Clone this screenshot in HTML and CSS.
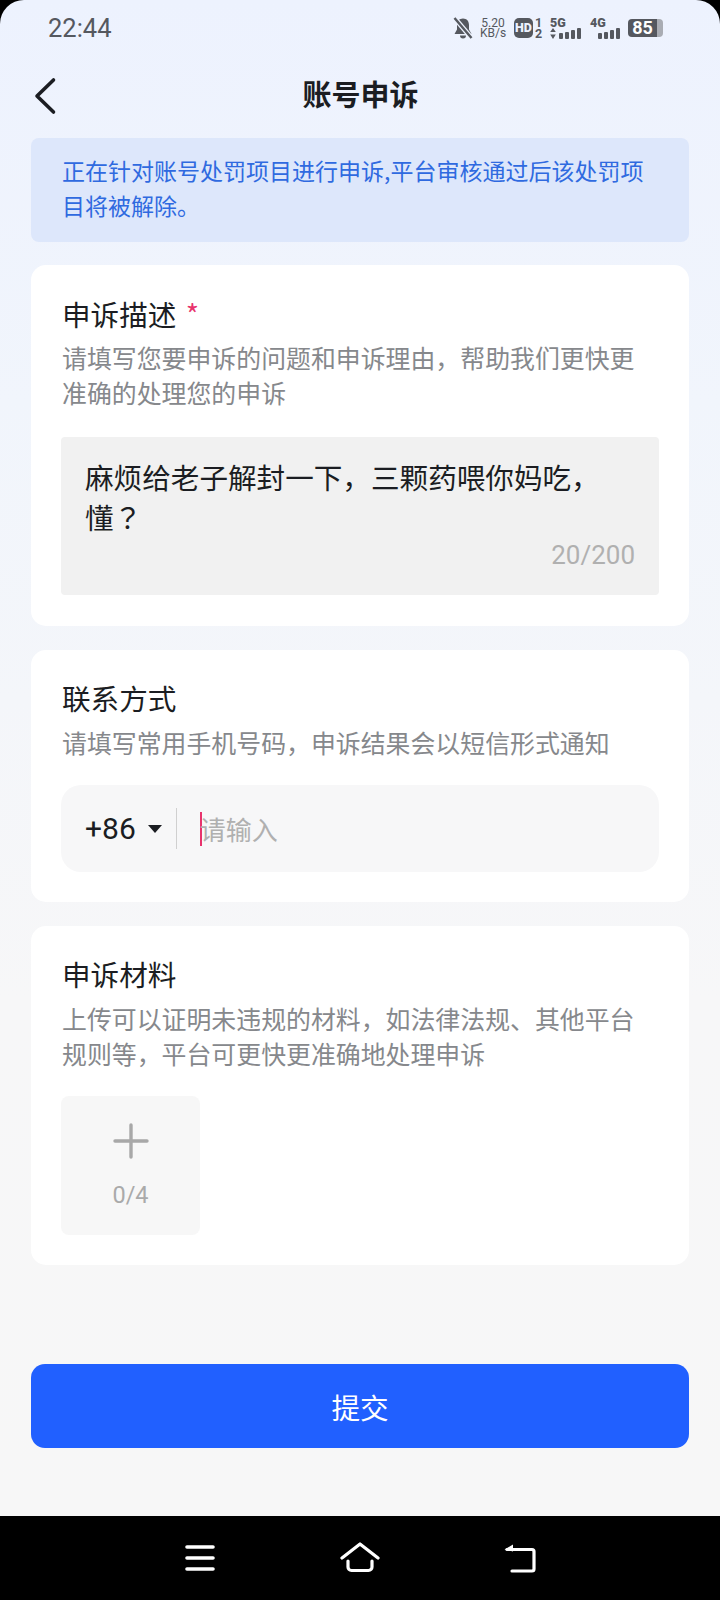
FILE: index.html
```html
<!DOCTYPE html>
<html>
	<head>
		<meta charset="utf-8">
		<title>账号申诉</title>
		<link rel="stylesheet" href="styles.css">
	</head>
	<body>
		<div class="screen">
			<div class="status-bar">
				<span class="status-time">22:44</span>
				<div class="status-icons">
					<svg class="bell" width="20" height="22" viewBox="0 0 20 22">
						<path d="M10 1.500c-3.800 0-6 2.800-6 6.500v4.500L1.500 17h17L16 12.500V8c0-3.700-2.200-6.500-6-6.500z" fill="#55585f"/>
						<path d="M7 18.500a3 3 0 0 0 6 0z" fill="#55585f"/>
						<path d="M1.500 1l17 20" stroke="#edf2fe" stroke-width="5"/>
						<path d="M1.500 1l17 20" stroke="#55585f" stroke-width="2.400"/>
					</svg>
					<div class="net-speed">5.20 KB/s</div>
					<span class="hd-badge">HD</span>
					<div class="sim-nums">1 2</div>
					<div class="signal signal-5g">
						<span class="signal-label">5G</span>
						<div class="signal-row">
							<svg width="6" height="11" viewBox="0 0 6 11"><path d="M3 0l2.800 4H.2zM3 11L.2 6.500h5.600z" fill="#55585f"/></svg>
							<i class="bar bar-1"></i><i class="bar bar-2"></i><i class="bar bar-3"></i><i class="bar bar-4"></i>
						</div>
					</div>
					<div class="signal signal-4g">
						<span class="signal-label">4G</span>
						<div class="signal-row">
							<i class="bar bar-1"></i><i class="bar bar-2"></i><i class="bar bar-3"></i><i class="bar bar-4"></i>
						</div>
					</div>
					<div class="battery"><span class="battery-level">85</span><i class="battery-rest"></i></div>
				</div>
			</div>

			<div class="header">
				<svg class="back-icon" width="24" height="38" viewBox="0 0 24 38">
					<path d="M20.500 3L4 19l16.500 16" fill="none" stroke="#1b1d22" stroke-width="3.600" stroke-linecap="round" stroke-linejoin="round"/>
				</svg>
				<h1 class="page-title">账号申诉</h1>
			</div>

			<div class="content">
				<div class="notice">正在针对账号处罚项目进行申诉,平台审核通过后该处罚项目将被解除。</div>

				<div class="card card-desc">
					<div class="card-title">申诉描述 <span class="required">*</span></div>
					<div class="card-hint">请填写您要申诉的问题和申诉理由，帮助我们更快更准确的处理您的申诉</div>
					<div class="textarea">
						<div class="textarea-line">麻烦给老子解封一下，三颗药喂你妈吃，</div>
						<div class="textarea-line textarea-line-last">懂？</div>
						<div class="textarea-count">20/200</div>
					</div>
				</div>

				<div class="card card-contact">
					<div class="card-title">联系方式</div>
					<div class="card-hint">请填写常用手机号码，申诉结果会以短信形式通知</div>
					<div class="phone-input">
						<span class="phone-code">+86</span>
						<i class="phone-arrow"></i>
						<i class="phone-divider"></i>
						<i class="phone-caret"></i>
						<span class="phone-placeholder">请输入</span>
					</div>
				</div>

				<div class="card card-files">
					<div class="card-title">申诉材料</div>
					<div class="card-hint">上传可以证明未违规的材料，如法律法规、其他平台规则等，平台可更快更准确地处理申诉</div>
					<div class="upload">
						<svg width="36" height="36" viewBox="0 0 36 36">
							<path d="M18 2v32M2 18h32" stroke="#a8a8a8" stroke-width="3.400" stroke-linecap="round"/>
						</svg>
						<span class="upload-count">0/4</span>
					</div>
				</div>
			</div>

			<div class="submit-wrap">
				<button class="submit-btn">提交</button>
			</div>
		</div>

		<div class="nav-bar">
			<svg width="32" height="26" viewBox="0 0 32 26">
				<path d="M3 2h26M3 13h26M3 24h26" stroke="#fff" stroke-width="3.600" stroke-linecap="round"/>
			</svg>
			<svg width="40" height="32" viewBox="0 0 40 32">
				<path d="M2 16L20 2l18 14" fill="none" stroke="#fff" stroke-width="3.200" stroke-linecap="round" stroke-linejoin="round"/>
				<path d="M8 19v6a3.500 3.500 0 0 0 3.500 3.500h17A3.500 3.500 0 0 0 32 25v-6" fill="none" stroke="#fff" stroke-width="3.200" stroke-linecap="round"/>
			</svg>
			<svg width="34" height="30" viewBox="0 0 34 30">
				<path d="M4 6.500h25a2 2 0 0 1 2 2V26a2 2 0 0 1-2 2H9" fill="none" stroke="#fff" stroke-width="3.200" stroke-linecap="round" stroke-linejoin="round"/>
				<path d="M1.500 6.500L10 1.500v7z" fill="#fff"/>
			</svg>
		</div>
	</body>
</html>
```

FILE: styles.css
```css
* {
	box-sizing: border-box;
}

html, body {
	margin: 0;
	padding: 0;
	background: #000;
}

body {
	width: 720px;
	height: 1600px;
	font-family: "Noto Sans CJK SC", "Noto Sans", sans-serif;
	overflow: hidden;
}

.screen {
	height: 1516px;
	border-radius: 24px 24px 0 0;
	background: linear-gradient(180deg, #edf2fe 0, #f1f5fc 400px, #f7f7f8 1000px, #f7f7f7 100%);
	display: flex;
	flex-direction: column;
}

/* status bar */
.status-bar {
	height: 56px;
	padding: 0 0 0 48px;
	display: flex;
	align-items: center;
	justify-content: space-between;
	color: #55585f;
}

.status-time {
	font-family: Roboto, sans-serif;
	font-size: 25.500px;
}

.status-icons {
	display: flex;
	align-items: center;
	margin-right: 57px;
}

.bell {
	margin-right: 6px;
}

.net-speed {
	width: 28px;
	margin-right: 7px;
	font-family: Roboto, sans-serif;
	font-size: 12px;
	line-height: 10.500px;
	text-align: center;
}

.hd-badge {
	width: 19px;
	height: 20px;
	margin-right: 2px;
	border-radius: 5px;
	background: #55585f;
	color: #edf2fe;
	font-family: Roboto, sans-serif;
	font-size: 12.500px;
	font-weight: 900;
	line-height: 20px;
	text-align: center;
}

.sim-nums {
	width: 7px;
	margin-right: 8px;
	font-family: Roboto, sans-serif;
	font-size: 12.500px;
	font-weight: 700;
	line-height: 11px;
	text-align: center;
}

.signal {
	display: flex;
	flex-direction: column;
}

.signal-5g {
	width: 32px;
	margin-right: 8px;
}

.signal-4g {
	width: 31px;
	margin-right: 7px;
}

.signal-label {
	font-family: Roboto, sans-serif;
	font-size: 12.500px;
	font-weight: 900;
	line-height: 10px;
}

.signal-row {
	display: flex;
	align-items: flex-end;
	gap: 2px;
	height: 11px;
}

.signal-5g .signal-row svg {
	margin-right: 1px;
}

.signal-4g .signal-row {
	margin-left: 8px;
}

.bar {
	width: 4px;
	background: #55585f;
	border-radius: 1px;
}

.bar-1 {
	height: 6px;
}

.bar-2 {
	height: 7px;
}

.bar-3 {
	height: 9px;
}

.bar-4 {
	height: 11px;
}

.battery {
	display: flex;
	align-items: center;
}

.battery-level {
	width: 29px;
	height: 18px;
	border-radius: 4px 0 0 4px;
	background: #55585f;
	color: #fff;
	font-family: Roboto, sans-serif;
	font-size: 18px;
	font-weight: 700;
	line-height: 18px;
	text-align: center;
}

.battery-rest {
	width: 6px;
	height: 18px;
	border-radius: 0 4px 4px 0;
	background: #a9acb3;
}

/* header */
.header {
	height: 82px;
	padding-bottom: 8px;
	position: relative;
	display: flex;
	align-items: center;
	justify-content: center;
}

.back-icon {
	position: absolute;
	left: 33px;
	top: 21px;
}

.page-title {
	margin: 0;
	padding-left: 1px;
	font-size: 29px;
	font-weight: 700;
	color: #1b1d22;
}

/* content */
.content {
	padding: 0 31px;
	display: flex;
	flex-direction: column;
	gap: 23px;
}

.notice {
	height: 104px;
	padding: 15px 31px 0;
	border-radius: 8px;
	background: #dde7fb;
	color: #2f6ae0;
	font-size: 23px;
	line-height: 35px;
}

.card {
	background: #fff;
	border-radius: 15px;
	padding: 29px 31px 0;
}

.card-desc {
	height: 361px;
}

.card-contact {
	height: 252px;
	margin-top: 1px;
}

.card-contact .card-title,
.card-files .card-title {
	margin-top: -1px;
}

.card-contact .card-hint,
.card-files .card-hint {
	margin-top: 7px;
}

.card-files {
	height: 339px;
	margin-top: 1px;
}

.card-title {
	color: #1b1d22;
	font-size: 28.600px;
	line-height: 40px;
}

.required {
	color: #e8336d;
	margin-left: 3px;
}

.card-hint {
	margin-top: 6px;
	color: #86888c;
	font-size: 24.900px;
	line-height: 35px;
}

.textarea {
	height: 158px;
	margin: 27px -1px 0;
	padding: 20px 24px 0;
	background: #f1f1f1;
	border-radius: 4px;
}

.textarea-line {
	color: #1b1d22;
	font-size: 28.600px;
	line-height: 40px;
	white-space: nowrap;
}

.textarea-line-last {
	font-family: "Noto Sans CJK TC", sans-serif;
}

.textarea-count {
	text-align: right;
	color: #b0b0b0;
	font-family: Roboto, sans-serif;
	font-size: 26px;
	line-height: 36px;
}

.phone-input {
	height: 87px;
	margin: 25px -1px 0;
	padding-left: 24px;
	background: #f7f7f8;
	border-radius: 20px;
	display: flex;
	align-items: center;
}

.phone-code {
	color: #1b1d22;
	font-family: Roboto, sans-serif;
	font-size: 30px;
}

.phone-arrow {
	width: 0;
	height: 0;
	margin-left: 12px;
	border-left: 7px solid transparent;
	border-right: 7px solid transparent;
	border-top: 8px solid #1b1d22;
}

.phone-divider {
	width: 1px;
	height: 41px;
	margin-left: 14px;
	background: #d0d0d0;
}

.phone-caret {
	width: 2px;
	height: 34px;
	margin-left: 23px;
	background: #e8336d;
}

.phone-placeholder {
	margin-left: -2px;
	color: #b0b0b0;
	font-size: 26px;
}

.upload {
	width: 139px;
	height: 139px;
	margin: 25px 0 0 -1px;
	background: #f7f7f7;
	border-radius: 8px;
	display: flex;
	flex-direction: column;
	align-items: center;
	padding-top: 27px;
}

.upload-count {
	margin-top: 22px;
	color: #aaa;
	font-family: Roboto, sans-serif;
	font-size: 23.500px;
	line-height: 28px;
}

/* submit */
.submit-wrap {
	padding: 99px 31px 0;
}

.submit-btn {
	display: block;
	width: 100%;
	height: 84px;
	border: none;
	border-radius: 14px;
	background: #2160ff;
	color: #fff;
	font-family: inherit;
	font-size: 28.600px;
}

/* bottom nav */
.nav-bar {
	height: 84px;
	background: #000;
	display: flex;
	align-items: center;
	gap: 124px;
	padding-left: 184px;
}

.nav-bar svg:last-child {
	margin-left: -1px;
}
```
